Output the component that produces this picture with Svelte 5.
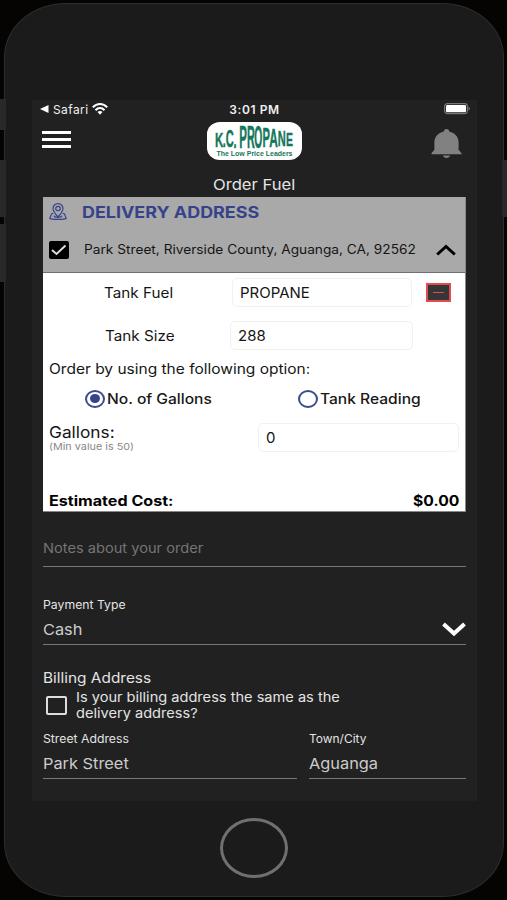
<script lang="ts">
  type FuelOption = 'gallons' | 'reading';

  interface LogoLetter {
    char: string;
    x: number;
    top: number;
    bottom: number;
    width: number;
  }

  const address = 'Park Street, Riverside County, Aguanga, CA, 92562';

  // Letters of the wordmark swell towards the middle
  const logoLetters: LogoLetter[] = [
    { char: 'K', x: 8, top: 10.5, bottom: 24.5, width: 8.3 },
    { char: '.', x: 15.8, top: 8, bottom: 24.5, width: 3 },
    { char: 'C', x: 18.8, top: 7.8, bottom: 25.3, width: 8 },
    { char: '.', x: 26.6, top: 8, bottom: 25.5, width: 3 },
    { char: 'P', x: 32.3, top: 3.2, bottom: 26, width: 7.6 },
    { char: 'R', x: 39.9, top: 3, bottom: 26, width: 7.8 },
    { char: 'O', x: 47.3, top: 3.5, bottom: 25.6, width: 8 },
    { char: 'P', x: 55.4, top: 4.8, bottom: 25, width: 7.4 },
    { char: 'A', x: 62.2, top: 6.6, bottom: 24.6, width: 8.6 },
    { char: 'N', x: 70.8, top: 8.8, bottom: 24.2, width: 8 },
    { char: 'E', x: 79, top: 11.2, bottom: 23.8, width: 7 },
  ];

  let expanded = $state(true);
  let selected = $state(true);
  let sameAddress = $state(false);
  let option = $state<FuelOption>('gallons');
</script>

<main class="stage">
  <div class="phone">
    <span class="side-key mute"></span>
    <span class="side-key volume-up"></span>
    <span class="side-key volume-down"></span>
    <span class="side-key power"></span>

    <div class="screen">
      <div class="status">
        <div class="status-left">
          <svg width="9" height="8" viewBox="0 0 9 8"><path d="M8.5 0v8L0 4z" fill="#fff" /></svg>
          <span class="back-app">Safari</span>
          <svg width="16" height="12" viewBox="0 0 16 12" fill="none" stroke="#fff" stroke-width="2">
            <path d="M.8 4.4C5-.1 11-.1 15.200 4.400" />
            <path d="M3.500 7.200c2.600-2.800 6.400-2.800 9 0" />
            <path d="M5.500 8.900 8 11.800l2.500-2.900c-1.500-1.300-3.500-1.300-5 0z" fill="#fff" stroke="none" />
          </svg>
        </div>
        <span class="clock">3:01 PM</span>
        <svg class="battery" width="27" height="12" viewBox="0 0 27 12">
          <rect x=".6" y=".6" width="22.800" height="10" rx="2.800" fill="none" stroke="#777" stroke-width="1.200" />
          <rect x="2" y="2" width="20" height="7.200" rx="1.300" fill="#fff" />
          <path d="M24.500 3.700c2 .6 2 3.200 0 3.800z" fill="#777" />
        </svg>
      </div>

      <header class="topbar">
        <button class="menu" aria-label="Menu"><i></i><i></i><i></i></button>
        <svg class="logo" width="95" height="38" viewBox="0 0 95 38">
          <rect width="95" height="38" rx="13" ry="12" fill="#fff" />
          {#each logoLetters as letter}
            <text
              class="logo-letter"
              transform="translate({letter.x} {letter.bottom}) scale(1 {(letter.bottom - letter.top) / 7.2})"
              textLength={letter.width}
              lengthAdjust="spacingAndGlyphs">{letter.char}</text>
          {/each}
          <text class="logo-tag" x="9.500" y="33.800" textLength="76" lengthAdjust="spacingAndGlyphs">The Low Price Leaders</text>
        </svg>
        <button class="bell" aria-label="Notifications">
          <svg width="31" height="31" viewBox="0 0 32 32" fill="#818181">
            <path d="M16 1c-1.800 0-2.800 1-2.800 2.600C7 5 3.500 9.500 3.500 15v7.500L.5 26v1h31v-1l-3-3.500V15c0-5.500-3.500-10-9.700-11.400C18.800 2 17.800 1 16 1z" />
            <path d="M12.300 28.500h7.400c-.5 3.300-6.900 3.300-7.400 0z" />
          </svg>
        </button>
      </header>

      <h1 class="title"><span class="wide">Order Fuel</span></h1>

      <section class="card">
        <div class="card-head">
          <div class="card-heading">
            <svg width="18" height="17" viewBox="0 0 18 17" fill="none" stroke="#36438a" stroke-width="1.200">
              <path d="M9 14C5.800 10.500 4 8 4 5.500a5 4.900 0 0 1 10 0C14 8 12.200 10.500 9 14z" />
              <ellipse cx="9" cy="5.500" rx="2.300" ry="2.200" />
              <path d="M4.300 10.300 2.500 11 .8 15.400c2 1.200 14.400 1.200 16.400 0L15.500 11l-1.800-.7" />
              <path d="M5.500 12.600c-2.500 2.300 9.500 2.300 7 0" />
            </svg>
            <h2 class="wide">DELIVERY ADDRESS</h2>
          </div>
          <div class="card-address">
            <button class="check" aria-label="Select address" onclick={() => (selected = !selected)}>
              {#if selected}
                <svg width="20" height="18" viewBox="0 0 20 18" fill="none" stroke="#ddd" stroke-width="2">
                  <path d="m3 9 4.500 4L16.500 4.500" />
                </svg>
              {/if}
            </button>
            <span class="address wide">{address}</span>
            <button class="chevron" aria-label="Toggle details" onclick={() => (expanded = !expanded)}>
              <svg width="20" height="12" viewBox="0 0 20 12" fill="none" stroke="#000" stroke-width="3">
                <path d="M1.200 10.500 10 2.500l8.800 8" />
              </svg>
            </button>
          </div>
        </div>

        {#if expanded}
          <div class="card-body">
            <div class="tank-row">
              <div class="tank-label fuel"><span class="wide">Tank Fuel</span></div>
              <div class="box fuel-box"><span class="wide">PROPANE</span></div>
              <button class="remove" aria-label="Remove tank"><i></i></button>
            </div>
            <div class="tank-row">
              <div class="tank-label size"><span class="wide">Tank Size</span></div>
              <div class="box size-box"><span class="wide">288</span></div>
            </div>

            <p class="prompt"><span class="wide">Order by using the following option:</span></p>

            <div class="options">
              <button class="option" onclick={() => (option = 'gallons')}>
                <span class="radio">{#if option === 'gallons'}<i></i>{/if}</span>
                <span class="option-text wide">No. of Gallons</span>
              </button>
              <button class="option" onclick={() => (option = 'reading')}>
                <span class="radio">{#if option === 'reading'}<i></i>{/if}</span>
                <span class="option-text wide">Tank Reading</span>
              </button>
            </div>

            <div class="gallons">
              <div class="gallons-label">
                <span class="gallons-name wide">Gallons:</span>
                <small class="wide">(Min value is 50)</small>
              </div>
              <div class="box gallons-box"><span class="wide">0</span></div>
            </div>

            <div class="total">
              <strong class="total-label wide">Estimated Cost:</strong>
              <strong class="total-value wide">$0.00</strong>
            </div>
          </div>
        {/if}
      </section>

      <div class="line-field notes"><span class="wide">Notes about your order</span></div>

      <div class="payment">
        <div class="caption"><span class="wide">Payment Type</span></div>
        <div class="line-field select">
          <span class="wide">Cash</span>
          <svg width="24" height="15" viewBox="0 0 24 15" fill="none" stroke="#fff" stroke-width="4">
            <path d="m1.500 2 10.500 9.500L22.500 2" />
          </svg>
        </div>
      </div>

      <section class="billing">
        <h3><span class="wide">Billing Address</span></h3>
        <div class="same">
          <button class="same-check" class:on={sameAddress} aria-label="Same address" onclick={() => (sameAddress = !sameAddress)}></button>
          <p class="wide">Is your billing address the same as the<br />delivery address?</p>
        </div>
        <div class="columns">
          <div class="street">
            <div class="caption"><span class="wide">Street Address</span></div>
            <div class="line-field"><span class="wide">Park Street</span></div>
          </div>
          <div class="town">
            <div class="caption"><span class="wide">Town/City</span></div>
            <div class="line-field"><span class="wide">Aguanga</span></div>
          </div>
        </div>
      </section>
    </div>

    <button class="home" aria-label="Home"></button>
  </div>
</main>

<style>
  :global(body) {
    margin: 0;
    background: #050402;
  }

  * {
    box-sizing: border-box;
  }

  .stage {
    width: 507px;
    height: 900px;
    padding: 3px 3px 3px 4px;
    overflow: hidden;
    font-family: Inter, 'Liberation Sans', sans-serif;
    white-space: nowrap;
    background: #050402;
  }

  button {
    padding: 0;
    border: 0;
    background: none;
    font: inherit;
    cursor: pointer;
  }

  h1, h2, h3, p {
    margin: 0;
    font-weight: 400;
  }

  svg {
    display: block;
    flex-shrink: 0;
  }

  /* Extended letterforms, --stretch tunes a single label */
  .wide {
    display: inline-block;
    transform: scaleX(var(--stretch, 1.09));
    transform-origin: left center;
  }

  .phone {
    position: relative;
    display: flex;
    flex-direction: column;
    align-items: center;
    height: 894px;
    padding-top: 96px;
    border: 1px solid #2d2d2c;
    border-radius: 62px / 54px;
    background: #1b1b1b;
  }

  .side-key {
    position: absolute;
    left: -5px;
    width: 6px;
    background: #292929;
  }

  .mute { top: 95px; height: 31px; }
  .volume-up { top: 156px; height: 57px; }
  .volume-down { top: 220px; height: 58px; }
  .power { top: 156px; right: -4px; left: auto; width: 5px; height: 57px; }

  .screen {
    display: flex;
    flex-direction: column;
    width: 445px;
    height: 701px;
    margin-left: 1px;
    padding: 0 11px;
    background: #212121;
    color: #e4e4e4;
  }

  .status {
    display: grid;
    grid-template-columns: 1fr auto 1fr;
    align-items: center;
    height: 18px;
    margin: 0 -5px 0 -3px;
    color: #f0f0f0;
  }

  .status-left {
    display: flex;
    align-items: center;
    gap: 4px;
  }

  .back-app {
    font-size: 12px;
    letter-spacing: 0.4px;
  }

  .clock {
    font-size: 12px;
    font-weight: 600;
    letter-spacing: 0.6px;
    margin-right: 2px;
  }

  .battery {
    justify-self: end;
  }

  .topbar {
    display: grid;
    grid-template-columns: 1fr auto 1fr;
    height: 54px;
    padding-top: 4px;
  }

  .menu {
    display: flex;
    flex-direction: column;
    gap: 4px;
    width: 29px;
    height: 18px;
    margin: 9px 0 0 -1px;
  }

  .menu i {
    flex-shrink: 0;
    height: 3px;
    background: #fff;
  }

  .logo {
    overflow: visible;
  }

  .logo-letter {
    font: 700 10px 'Liberation Sans', sans-serif;
    fill: #16775a;
    stroke: #16775a;
    stroke-width: 0.2px;
  }

  .logo-tag {
    font: 700 7px 'Liberation Sans', sans-serif;
    fill: #16775a;
  }

  .bell {
    justify-self: end;
    align-self: start;
    margin: 6px 4px 0 0;
  }

  .title {
    height: 25px;
    font-size: 15px;
    line-height: 25px;
    text-align: center;
  }

  .title .wide {
    --stretch: 1.11;
    transform-origin: center;
  }

  .card {
    height: 315px;
    border: solid #888;
    border-width: 0 1px 1px 0;
    background: #fff;
    color: #151515;
  }

  .card-head {
    height: 76px;
    padding: 6px 9px 0 6px;
    border-bottom: 1px solid #707070;
    background: #a9a9a9;
  }

  .card-heading {
    display: flex;
    gap: 15px;
    height: 18px;
  }

  h2 {
    --stretch: 1.12;
    color: #36438a;
    font-size: 16px;
    font-weight: 700;
    line-height: 19px;
  }

  .card-address {
    display: flex;
    align-items: center;
    height: 57px;
  }

  .check {
    width: 20px;
    height: 18px;
    border-radius: 2px;
    background: #000;
  }

  .address {
    --stretch: 1.096;
    width: 353px;
    margin-left: 15px;
    font-size: 12.500px;
  }

  .card-body {
    padding: 5px 6px 0;
  }

  .tank-row {
    display: flex;
    align-items: center;
    height: 29px;
    margin-bottom: 14px;
    font-size: 14px;
  }

  .fuel { width: 183px; padding-left: 55px; }
  .size { width: 181px; padding-left: 56px; }

  .box {
    --stretch: 1.07;
    display: flex;
    align-items: center;
    height: 29px;
    padding-left: 7px;
    border: 1px solid #f1f1f1;
    border-radius: 5px;
    font-size: 14px;
  }

  .fuel-box { width: 180px; }
  .size-box { width: 183px; }

  .remove {
    display: flex;
    align-items: center;
    justify-content: center;
    width: 25px;
    height: 19px;
    margin-left: 14px;
    border: 2px solid #e34b51;
    background: #363636;
  }

  .remove i {
    width: 11px;
    height: 1px;
    background: #e34b51;
  }

  .prompt {
    --stretch: 1.107;
    height: 20px;
    margin-top: -5px;
    font-size: 14px;
    line-height: 20px;
  }

  .options {
    display: flex;
    height: 39px;
    padding-left: 36px;
  }

  .option {
    display: flex;
    flex-shrink: 0;
    align-items: center;
    gap: 2px;
    width: 213px;
    color: #181818;
  }

  .option:last-child {
    width: 160px;
  }

  .option-text {
    --stretch: 1.112;
    font-size: 14px;
    font-weight: 500;
  }

  .radio {
    display: grid;
    place-items: center;
    width: 20px;
    height: 18px;
    border: 2px solid #3b4b8c;
    border-radius: 50%;
  }

  .radio i {
    width: 10px;
    height: 9px;
    border-radius: 50%;
    background: #36438a;
  }

  .gallons {
    display: flex;
    justify-content: space-between;
    height: 72px;
    padding-top: 5px;
  }

  .gallons-label {
    display: flex;
    flex-direction: column;
  }

  .gallons-name {
    --stretch: 1.08;
    font-size: 16px;
    line-height: 19px;
  }

  small {
    --stretch: 1.14;
    color: #888;
    font-size: 9.500px;
    line-height: 10px;
  }

  .gallons-box {
    width: 201px;
  }

  .total {
    --stretch: 1.15;
    display: flex;
    justify-content: space-between;
    height: 22px;
    color: #000;
    font-size: 14px;
    line-height: 22px;
  }

  .total-value {
    --stretch: 1.12;
    transform-origin: right center;
  }

  .line-field {
    height: 30px;
    border-bottom: 1px solid #777;
    color: #ccc;
    font-size: 15px;
    line-height: 29px;
  }

  .notes {
    --stretch: 1.125;
    height: 55px;
    padding-top: 22px;
    color: #757575;
    font-size: 13px;
  }

  .payment {
    padding-top: 30px;
  }

  .caption {
    --stretch: 1.065;
    height: 18px;
    font-size: 11.500px;
    line-height: 17px;
  }

  .select {
    display: flex;
    align-items: center;
    justify-content: space-between;
  }

  .billing {
    padding-top: 23px;
  }

  h3 {
    --stretch: 1.1;
    height: 20px;
    font-size: 14px;
    line-height: 20px;
  }

  .same {
    display: flex;
    gap: 9px;
    height: 43px;
    padding-left: 3px;
  }

  .same p {
    --stretch: 1.122;
    padding-top: 1px;
    font-size: 13px;
    line-height: 16px;
  }

  .same-check {
    width: 21px;
    height: 19px;
    margin-top: 8px;
    border: 2px solid #ddd;
    border-radius: 2px;
  }

  .same-check.on {
    background: #ddd;
  }

  .columns {
    display: flex;
    gap: 12px;
  }

  .street { width: 254px; }
  .town { width: 157px; }

  .town .caption {
    --stretch: 1.04;
  }

  .home {
    width: 68px;
    height: 60px;
    margin-top: 17px;
    border: 3px solid #707070;
    border-radius: 50%;
  }
</style>
